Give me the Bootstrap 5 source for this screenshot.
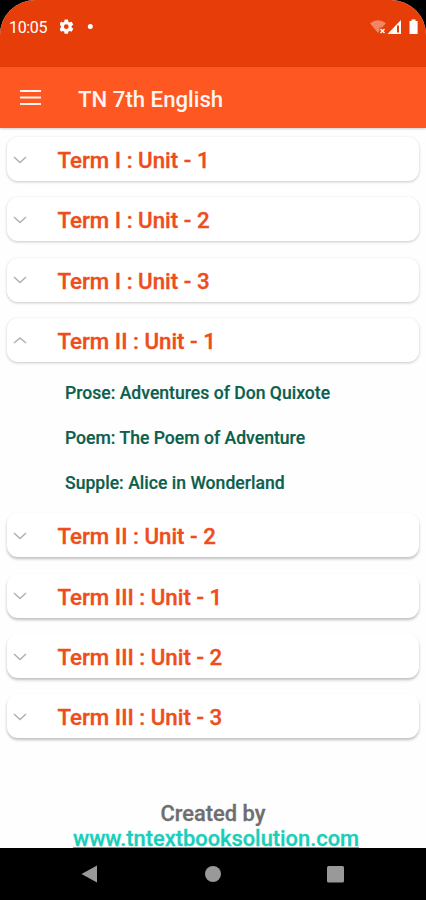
<!DOCTYPE html>
<html lang="en">
<head>
<meta charset="utf-8">
<meta name="viewport" content="width=device-width, initial-scale=1">
<title>TN 7th English</title>
<link href="https://cdn.jsdelivr.net/npm/bootstrap@5.3.0/dist/css/bootstrap.min.css" rel="stylesheet">
<style>
body { font-family: Roboto, sans-serif; background: #000; height: 900px; }
svg { display: block; flex: none; }
.screen { height: 848px; background: #fefefe; border-radius: 35px 35px 0 0; }
.status { height: 67px; background: #e73d08; padding: 17px 7px 0 9px; border-radius: 35px 35px 0 0; }
.clock { font-size: 16px; line-height: 20px; letter-spacing: -.35px; width: 51px; padding-top: 1px; }
.appbar { height: 61px; background: #ff5722; padding: 0 19px; box-shadow: 0 1px 2px rgba(0,0,0,.2); gap: 37px; }
.app-title { font-size: 22.2px; line-height: 28px; font-weight: 500; color: #fff4ef; padding-top: 3px; }
.units { padding: 9px 7px 0; gap: 16.35px; }
.unit { height: 44px; border-radius: 11px; padding: 1px 6px 0; gap: 30.5px; background: #fff; border: 0; color: #ee4d1c;
  font-size: 22.3px; line-height: 28px; font-weight: 500; -webkit-text-stroke: .35px; box-shadow: 0 1px 3px rgba(0,0,0,.22); }
.unit span { padding-top: 1px; }
.unit.low { box-shadow: 0 2px 3px rgba(0,0,0,.25); }
.lessons { margin: -6.9px 0 -9.4px; padding-left: 58px; color: #0d5f4d; font-size: 17.6px; font-weight: 500; -webkit-text-stroke: .2px; }
.lessons li { height: 45px; line-height: 45px; }
.credit { padding-top: 63px; font-size: 21.85px; line-height: 25px; font-weight: 500; -webkit-text-stroke: .3px; color: #6e6e6e; }
.credit a { color: #17cfba; line-height: 21px; margin-top: 2px; padding-left: 6px; text-decoration-thickness: 1px; text-underline-offset: 1px; }
.sysnav { height: 52px; }
</style>
</head>
<body class="d-flex flex-column overflow-hidden">
<svg class="d-none" aria-hidden="true">
  <symbol id="down" viewBox="0 0 14 8"><path d="M1 1l6 5.500L13 1" fill="none" stroke="#b0b0b0" stroke-width="1.500"/></symbol>
  <symbol id="up" viewBox="0 0 14 8"><path d="M1 6l6-5L13 6" fill="none" stroke="#b0b0b0" stroke-width="1.500"/></symbol>
</svg>
<div class="screen d-flex flex-column">
  <header>
    <div class="status d-flex align-items-start text-white">
      <span class="clock">10:05</span>
      <svg width="73" height="20" viewBox="0 0 73 20">
        <path fill="#fff" fill-rule="evenodd" transform="translate(-2.6 .8) scale(.74)" d="M19.14 12.94c.04-.3.06-.61.06-.94s-.02-.64-.07-.94l2.030-1.580a.49.49 0 0 0 .12-.61l-1.920-3.320a.49.49 0 0 0-.59-.22l-2.390.96a7 7 0 0 0-1.620-.94l-.36-2.540A.48.48 0 0 0 13.920 2.400h-3.840a.47.47 0 0 0-.47.41l-.36 2.540a7.300 7.300 0 0 0-1.620.94l-2.390-.96a.47.47 0 0 0-.59.22L2.740 8.870a.47.47 0 0 0 .12.61l2.030 1.580a6 6 0 0 0 0 1.880l-2.030 1.580a.49.49 0 0 0-.12.61l1.920 3.320c.12.22.37.29.59.22l2.390-.96c.5.38 1.030.7 1.620.94l.36 2.540c.05.24.24.41.48.41h3.840c.24 0 .44-.17.47-.41l.36-2.540a7 7 0 0 0 1.620-.94l2.390.96c.22.08.47 0 .59-.22l1.920-3.320a.47.47 0 0 0-.12-.61zM12 15.200a3.200 3.200 0 1 1 0-6.400 3.200 3.200 0 0 1 0 6.400z"/>
        <circle cx="30.300" cy="9.500" r="2.500" fill="#fff"/>
      </svg>
      <svg class="ms-auto" width="50" height="18" viewBox="0 0 50 18">
        <path d="M1 6.200Q9 .2 17 6.200L13 10.500H10.500V14L9 16z" fill="#fff" fill-opacity=".38"/>
        <path d="M11.500 12l4 4m0-4l-4 4" stroke="#fff" stroke-width="1.500"/>
        <path d="M32 3V17H18.500z" fill="#fff"/>
        <path d="M28 8.500h2V15.500h-2z" fill="#e73d08"/>
        <path d="M40.500 4h2V2.500h4V4h2.100V17h-8.100z" fill="#fff"/>
      </svg>
    </div>
    <div class="appbar d-flex align-items-center position-relative">
      <svg width="22" height="16" viewBox="0 0 22 16"><path d="M1 1h21M1 7.500h21M1 14h21" stroke="#fff4ef" stroke-width="2"/></svg>
      <div class="app-title">TN 7th English</div>
    </div>
  </header>
  <main class="units d-flex flex-column">
    <div class="unit d-flex align-items-center"><svg width="14" height="8"><use href="#down"/></svg><span>Term I : Unit - 1</span></div>
    <div class="unit d-flex align-items-center"><svg width="14" height="8"><use href="#down"/></svg><span>Term I : Unit - 2</span></div>
    <div class="unit d-flex align-items-center"><svg width="14" height="8"><use href="#down"/></svg><span>Term I : Unit - 3</span></div>
    <div class="unit d-flex align-items-center"><svg width="14" height="8"><use href="#up"/></svg><span>Term II : Unit - 1</span></div>
    <ul class="lessons list-unstyled">
      <li>Prose: Adventures of Don Quixote</li>
      <li>Poem: The Poem of Adventure</li>
      <li>Supple: Alice in Wonderland</li>
    </ul>
    <div class="unit low d-flex align-items-center"><svg width="14" height="8"><use href="#down"/></svg><span>Term II : Unit - 2</span></div>
    <div class="unit low d-flex align-items-center"><svg width="14" height="8"><use href="#down"/></svg><span>Term III : Unit - 1</span></div>
    <div class="unit low d-flex align-items-center"><svg width="14" height="8"><use href="#down"/></svg><span>Term III : Unit - 2</span></div>
    <div class="unit low d-flex align-items-center"><svg width="14" height="8"><use href="#down"/></svg><span>Term III : Unit - 3</span></div>
  </main>
  <footer class="credit d-flex flex-column align-items-center"><span>Created by</span><a href="#">www.tntextbooksolution.com</a></footer>
</div>
<nav class="sysnav d-flex align-items-center justify-content-center">
  <svg width="264" height="18" viewBox="0 0 264 18" fill="#999">
    <path d="M16 .5V17.500L.5 9z"/><circle cx="132" cy="9" r="8"/><rect x="246" y="1" width="17" height="16.500" rx="1.500"/>
  </svg>
</nav>
<script src="https://cdn.jsdelivr.net/npm/bootstrap@5.3.0/dist/js/bootstrap.bundle.min.js"></script>
</body>
</html>
